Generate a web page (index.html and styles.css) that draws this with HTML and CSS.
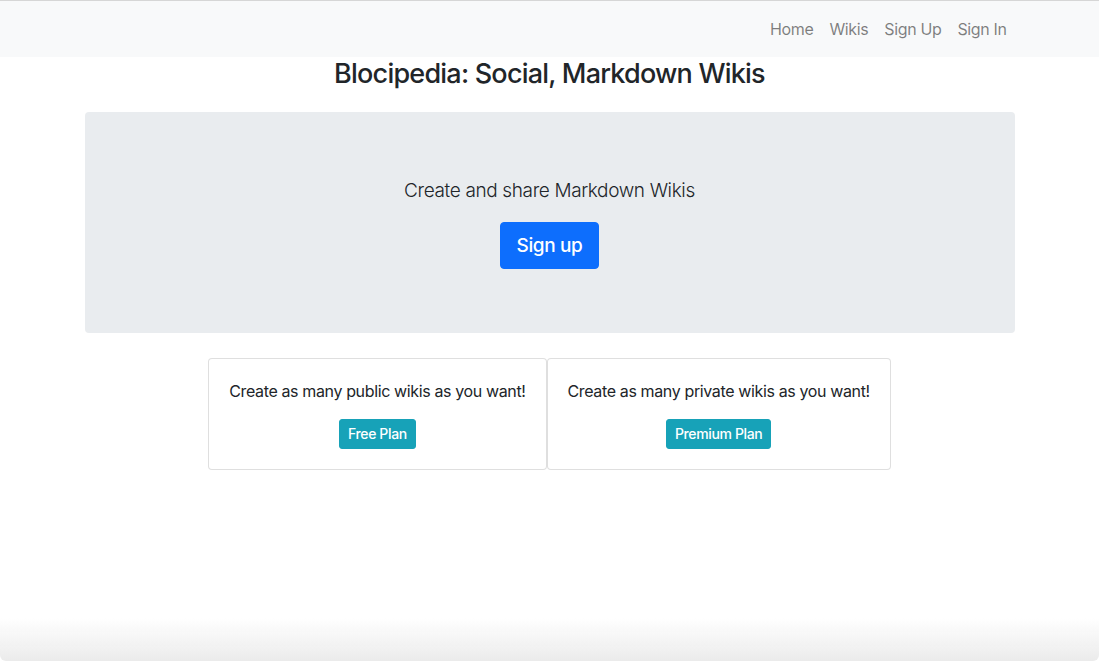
FILE: index.html
```html
<!DOCTYPE html>
<html lang="en">
<head>
<meta charset="utf-8">
<title>Blocipedia</title>
<link rel="stylesheet" href="styles.css">
</head>
<body>
<nav class="navbar">
  <div class="container nav-inner">
    <ul class="nav-links">
      <li><a href="#">Home</a></li>
      <li><a href="#">Wikis</a></li>
      <li><a href="#">Sign Up</a></li>
      <li><a href="#">Sign In</a></li>
    </ul>
  </div>
</nav>
<main class="container">
  <h1 class="title">Blocipedia: Social, Markdown Wikis</h1>
  <section class="jumbotron">
    <p class="lead">Create and share Markdown Wikis</p>
    <a class="btn btn-primary btn-lg" href="#">Sign up</a>
  </section>
  <div class="plans">
    <div class="card">
      <p class="card-text">Create as many public wikis as you want!</p>
      <a class="btn btn-info btn-sm" href="#">Free Plan</a>
    </div>
    <div class="card">
      <p class="card-text">Create as many private wikis as you want!</p>
      <a class="btn btn-info btn-sm" href="#">Premium Plan</a>
    </div>
  </div>
</main>
<div class="window-shade"></div>
</body>
</html>
```
FILE: styles.css
```css
* { box-sizing: border-box; }
html, body { margin: 0; padding: 0; }
body {
  font-family: Inter, "Noto Sans", "Liberation Sans", sans-serif;
  font-size: 16px;
  line-height: 1.5;
  letter-spacing: -0.023em;
  color: #212529;
  background: #fff;
  border-top: 1px solid #d6d6d6;
  min-height: 100vh;
}
.container {
  width: 960px;
  margin: 0 auto;
  padding: 0 15px;
}
.navbar {
  background: #f8f9fa;
  height: 56px;
  display: flex;
  align-items: center;
}
.nav-inner {
  display: flex;
  justify-content: flex-end;
}
.nav-links {
  list-style: none;
  margin: 0;
  padding: 0;
  display: flex;
}
.nav-links a {
  display: block;
  padding: 8px 8px;
  color: rgba(0,0,0,.5);
  text-decoration: none;
  font-size: 16px;
  line-height: 24px;
}
.title {
  margin: 0 0 22px;
  font-size: 27px;
  font-weight: 500;
  line-height: 33px;
  letter-spacing: -0.029em;
  text-align: center;
}
.jumbotron {
  background: #e9ecef;
  border-radius: 4px;
  padding: 64px 32px;
  display: flex;
  flex-direction: column;
  align-items: center;
  margin-bottom: 25px;
}
.lead {
  margin: 0 0 16px;
  font-size: 19px;
  font-weight: 300;
  line-height: 30px;
}
.btn {
  display: inline-block;
  text-decoration: none;
  color: #fff;
  border: 1px solid transparent;
  border-radius: 4px;
  font-weight: 500;
}
.btn-primary { background: #0d6efd; border-color: #0d6efd; }
.btn-lg {
  font-size: 19px;
  line-height: 29px;
  padding: 8px 16px;
}
.btn-info { background: #17a2b8; border-color: #17a2b8; }
.btn-sm {
  font-size: 14px;
  line-height: 20px;
  padding: 4px 8px;
  border-radius: 3px;
}
.plans {
  display: flex;
  justify-content: center;
}
.card {
  border: 1px solid rgba(0,0,0,.125);
  border-radius: 4px;
  padding: 20px;
  display: flex;
  flex-direction: column;
  align-items: center;
  background: #fff;
}
.card-text {
  margin: 0 0 16px;
  font-size: 16px;
  line-height: 24px;
}
.window-shade {
  position: fixed;
  left: 0;
  right: 0;
  bottom: 0;
  height: 44px;
  background: linear-gradient(to bottom, rgba(235,235,235,0), rgba(232,232,232,.85));
  border-radius: 0 0 6px 6px;
  pointer-events: none;
}
```
